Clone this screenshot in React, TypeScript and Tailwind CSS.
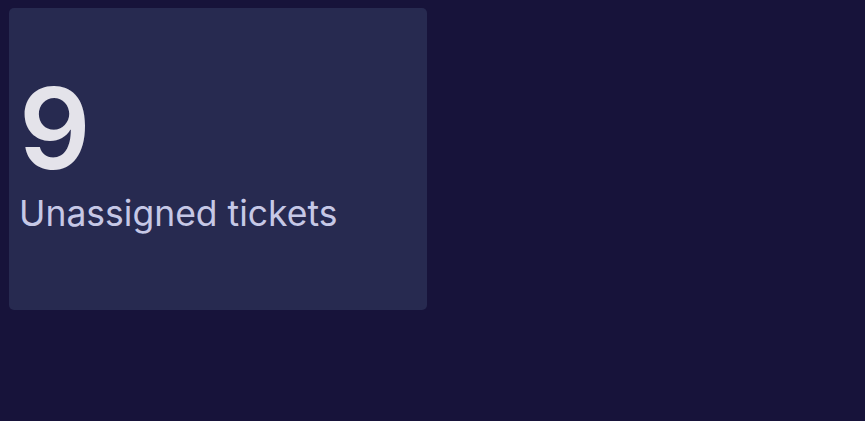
export default function App() {
  return (
    <div className="min-h-screen w-full bg-[#17133a] p-[8px_9px]" style={{ fontFamily: "Inter, 'Noto Sans', sans-serif" }}>
      <div className="flex h-[302px] w-[418px] flex-col justify-center rounded-[5px] bg-[#272a50] px-[10px] pb-[6px]">
        <div className="text-[112px] font-semibold leading-[112px] tracking-[-2px] text-[#e4e3ea] -mt-[4px]">9</div>
        <div className="mt-[8px] text-[35.5px] leading-[44px] text-[#c6c8e6]">Unassigned tickets</div>
      </div>
    </div>
  );
}
